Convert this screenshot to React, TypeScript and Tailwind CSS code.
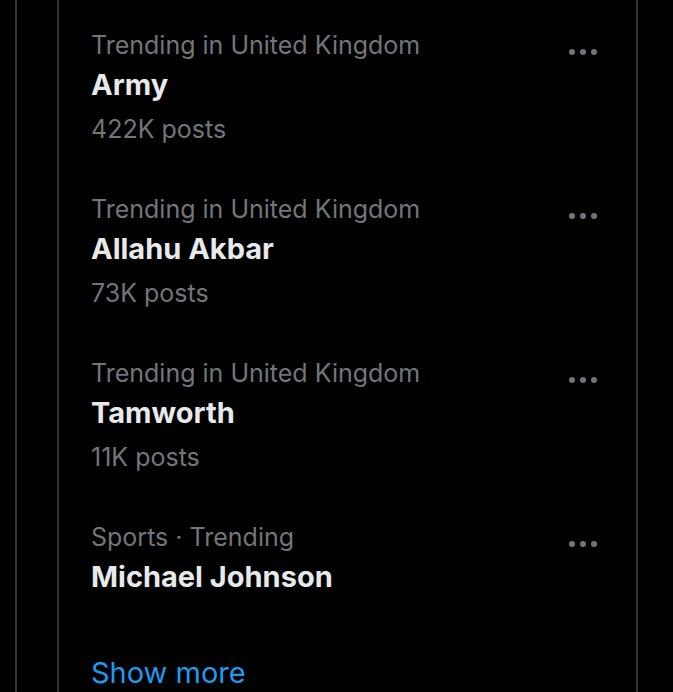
import React from "react";

type Trend = { cat: string; name: string; posts?: string };

const trends: Trend[] = [
  { cat: "Trending in United Kingdom", name: "Army", posts: "422K posts" },
  { cat: "Trending in United Kingdom", name: "Allahu Akbar", posts: "73K posts" },
  { cat: "Trending in United Kingdom", name: "Tamworth", posts: "11K posts" },
  { cat: "Sports · Trending", name: "Michael Johnson" },
];

function Dots() {
  return (
    <div className="flex items-center gap-[5px] mt-[24px]">
      <span className="block w-[6px] h-[6px] rounded-full bg-[#71767b]" />
      <span className="block w-[6px] h-[6px] rounded-full bg-[#71767b]" />
      <span className="block w-[6px] h-[6px] rounded-full bg-[#71767b]" />
    </div>
  );
}

export default function App() {
  return (
    <div
      className="w-[673px] h-[692px] bg-black overflow-hidden flex"
      style={{ fontFamily: "Inter, 'Noto Sans', sans-serif" }}
    >
      <div className="ml-[15px] w-[2px] h-full bg-[#333639]" />
      <div className="ml-[40px] w-[581px] h-full border-l-2 border-r-2 border-[#333639] flex flex-col pt-[25px]">
        {trends.map((t, i) => (
          <div key={i} className="flex items-start pl-[32px] pr-[39px] justify-between mb-[36px]">
            <div className="flex flex-col">
              <div className="h-[40px] leading-[40px] text-[25px] text-[#71767b]">{t.cat}</div>
              <div className="h-[40px] leading-[40px] text-[29px] font-bold text-[#e7e9ea]">{t.name}</div>
              {t.posts && (
                <div className="h-[48px] leading-[48px] text-[25px] text-[#71767b]">{t.posts}</div>
              )}
            </div>
            <Dots />
          </div>
        ))}
        <div className="pl-[32px] mt-[16px] h-[48px] leading-[48px] text-[29px] text-[#1d9bf0]">Show more</div>
      </div>
    </div>
  );
}
